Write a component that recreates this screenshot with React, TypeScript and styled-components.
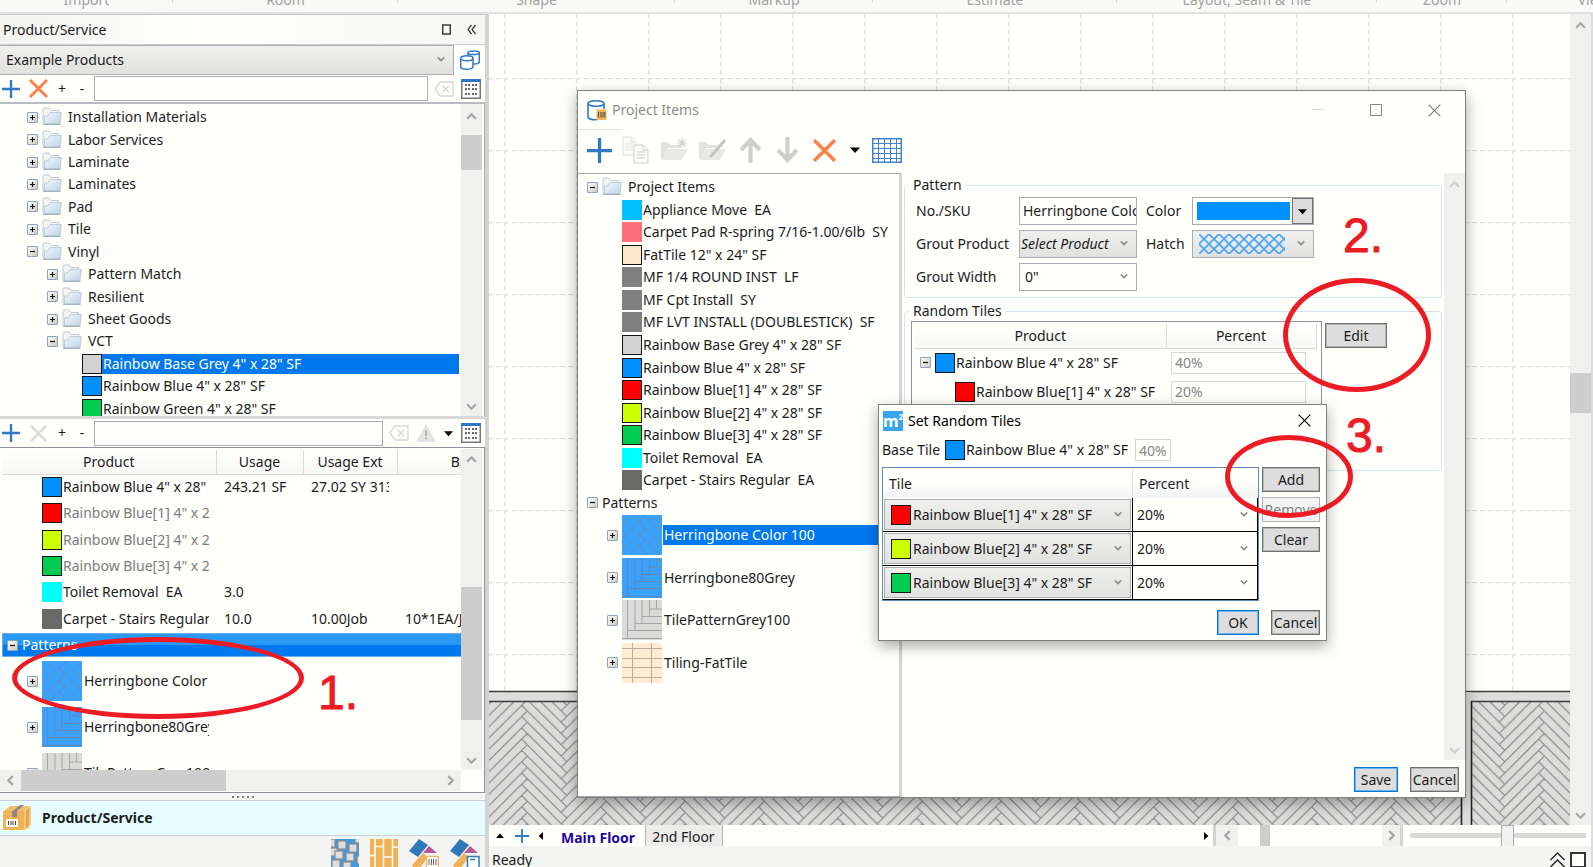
import React from "react";
import styled, { createGlobalStyle, css } from "styled-components";

const paper = "#fffffc";
const ink = "#1c1c1c";
const line = "#abadb3";
const accent = "#0078ee";
const brandBlue = "#2f78c4";
const marker = "#ed1c24";

const GlobalStyle = createGlobalStyle`
  * { box-sizing: border-box; }
  body { margin: 0; overflow: hidden; background: ${paper}; }
  body, button, input, select, table { font-family: "Noto Sans", "Open Sans", sans-serif; font-size: 14px; line-height: 20px; color: ${ink}; }
  button, input, select { margin: 0; padding: 0; border-radius: 0; outline: none; }
  ul { list-style: none; margin: 0; padding: 0; }
  svg { display: block; flex: none; }
`;

/* ---------- page frame ---------- */

const Page = styled.div`
  position: relative;
  display: flex;
  flex-direction: column;
  height: 100vh;
  overflow: hidden;
  background: ${paper};
`;

const Ribbon = styled.header`
  display: flex;
  flex: none;
  height: 14px;
  overflow: hidden;
  background: #f9faf7;
  border-bottom: 2px solid #dfe0e0;
`;

const RibbonGroup = styled.div<{ $w: number }>`
  flex: none;
  display: flex;
  justify-content: center;
  align-items: flex-end;
  width: ${(p) => p.$w}px;
  padding-bottom: 2px;
  color: #a2a2a2;
  background: linear-gradient(#d4d6d8, #d4d6d8) right top / 1px 3px no-repeat;
`;

const Workspace = styled.div`
  flex: 1;
  min-height: 0;
  display: flex;
`;

/* ---------- shared parts ---------- */

const IconButton = styled.button`
  display: flex;
  align-items: center;
  justify-content: center;
  flex: none;
  border: 0;
  background: none;
  color: ${ink};
`;

const PushButton = styled.button<{ $primary?: boolean }>`
  height: 25px;
  border: 1px solid ${(p) => (p.$primary ? "#0078d7" : "#707070")};
  box-shadow: inset 0 0 0 1px ${(p) => (p.$primary ? "#6fb4ea" : "#b5b5b5")};
  background: #dddddd;
  white-space: nowrap;
  &:disabled {
    background: #f4f4f4;
    border-color: #adb2b5;
    color: #838383;
    box-shadow: none;
  }
`;

const TextBox = styled.input<{ $muted?: boolean }>`
  min-width: 0;
  border: 1px solid ${(p) => (p.$muted ? "#d5d7d9" : line)};
  background: ${paper};
  color: ${(p) => (p.$muted ? "#868686" : ink)};
`;

const ComboFrame = styled.div<{ $flat?: boolean; $bare?: boolean }>`
  display: grid;
  align-items: center;
  min-width: 0;
  border: 1px solid ${line};
  background: ${paper};
  ${(p) => p.$flat && css`background: linear-gradient(#f0f0ee, #e1e1df);`}
  ${(p) => p.$bare && css`border: 0; background: none;`}
  & > * { grid-area: 1 / 1; }
`;

const ComboSelect = styled.select<{ $pad: number; $italic?: boolean }>`
  appearance: none;
  width: 100%;
  height: 100%;
  min-width: 0;
  padding: 0 0 0 ${(p) => p.$pad}px;
  border: 0;
  background: none;
  font-style: ${(p) => (p.$italic ? "italic" : "normal")};
`;

const ComboArrow = styled.span`
  justify-self: end;
  margin: 0 8px 2px 0;
  pointer-events: none;
`;

const ComboLead = styled.span`
  justify-self: start;
  margin-left: 6px;
  pointer-events: none;
`;

type ComboProps = {
  label?: string;
  id?: string;
  value: string;
  pad?: number;
  flat?: boolean;
  bare?: boolean;
  italic?: boolean;
  lead?: React.ReactNode;
  className?: string;
};

const Chevron = ({ dir = "down", size = 8, color = "#8a8a8a" }: { dir?: "down" | "up" | "left" | "right"; size?: number; color?: string }) => {
  const turn = { down: 0, left: 90, up: 180, right: 270 }[dir];
  return (
    <svg width={size} height={size} viewBox="0 0 10 10" aria-hidden="true">
      <path d="M1 3 L5 7 L9 3" transform={`rotate(${turn} 5 5)`} fill="none" stroke={color} strokeWidth="2" />
    </svg>
  );
};

const Combo = ({ label, id, value, pad = 4, flat, bare, italic, lead, className }: ComboProps) => (
  <ComboFrame $flat={flat} $bare={bare} className={className}>
    <ComboSelect id={id} aria-label={label} $pad={pad} $italic={italic} defaultValue={value}>
      <option>{value}</option>
    </ComboSelect>
    {lead && <ComboLead>{lead}</ComboLead>}
    <ComboArrow>
      <Chevron />
    </ComboArrow>
  </ComboFrame>
);

const Swatch = styled.span<{ $color: string; $edge?: boolean }>`
  display: block;
  flex: none;
  width: 20px;
  height: 20px;
  background: ${(p) => p.$color};
  border: 1px solid ${(p) => (p.$edge ? "#161616" : p.$color)};
`;

const ToggleButton = styled.button`
  display: block;
  flex: none;
  width: 11px;
  height: 11px;
  border: 1px solid #8ba3bd;
  border-radius: 1px;
  background: linear-gradient(135deg, #ffffff, #cfc9bd);
`;

const Toggle = ({ open }: { open?: boolean }) => (
  <ToggleButton aria-label={open ? "Collapse" : "Expand"}>
    <svg width="9" height="9" viewBox="0 0 9 9">
      <path d={open ? "M2 4.5H7" : "M2 4.5H7M4.5 2V7"} stroke="#111" strokeWidth="1.2" />
    </svg>
  </ToggleButton>
);

const ScrollBar = styled.div<{ $row?: boolean }>`
  flex: none;
  display: flex;
  flex-direction: ${(p) => (p.$row ? "row" : "column")};
  ${(p) => (p.$row ? "height" : "width")}: 21px;
  background: #f0f0ef;
`;

const ScrollEnd = styled.button<{ $size: number }>`
  flex: 0 0 ${(p) => p.$size}px;
  display: flex;
  align-items: center;
  justify-content: center;
  border: 0;
  background: none;
`;

const ScrollTrack = styled.div<{ $white?: boolean }>`
  flex: 1;
  display: flex;
  flex-direction: inherit;
  background: ${(p) => (p.$white ? paper : "none")};
`;

const ScrollGap = styled.div<{ $size: string }>`
  flex: 0 0 ${(p) => p.$size};
`;

const ScrollThumb = styled.div<{ $size: string }>`
  flex: 0 0 ${(p) => p.$size};
  background: #cdcdcd;
`;

/* ---------- drawings ---------- */

const PlusIcon = ({ size }: { size: number }) => (
  <svg width={size} height={size} viewBox="0 0 20 20" aria-hidden="true">
    <path d="M10 0V20M0 10H20" stroke={brandBlue} strokeWidth="2.6" />
  </svg>
);

const CrossIcon = ({ size, color = "#ff7f45", weight = 3 }: { size: number; color?: string; weight?: number }) => (
  <svg width={size} height={size} viewBox="0 0 20 20" aria-hidden="true">
    <path d="M1 1L19 19M19 1L1 19" stroke={color} strokeWidth={weight} />
  </svg>
);

const Caret = ({ dir = "down", size = 9 }: { dir?: "down" | "up" | "left" | "right"; size?: number }) => (
  <svg width={size} height={size} viewBox="0 0 10 10" aria-hidden="true">
    <path d="M0 2.5H10L5 8Z" fill="#000" transform={`rotate(${{ down: 0, left: 90, up: 180, right: 270 }[dir]} 5 5)`} />
  </svg>
);

const FolderIcon = () => (
  <svg width="20" height="18" viewBox="0 0 20 18" aria-hidden="true">
    <defs>
      <linearGradient id="folderFill" x1="0" y1="0" x2="1" y2="1">
        <stop offset="0" stopColor="#f3f8fb" />
        <stop offset="1" stopColor="#bed2e4" />
      </linearGradient>
    </defs>
    <path d="M1 16V2.5Q1 1 2.500 1H7L9 3.500H16.500V16Z" fill="#f3f4f4" stroke="#c0c9cf" />
    <path d="M2.500 17V9H6L8 5.500H19.300L18 17Z" fill="url(#folderFill)" stroke="#b3c4d2" strokeWidth=".8" />
    <path d="M1 17.300H18.500" stroke="#93a5b4" />
  </svg>
);

const DatabasesIcon = () => (
  <svg width="20" height="20" viewBox="0 0 20 20" fill="none" stroke={brandBlue} strokeWidth="1.500" aria-hidden="true">
    <path d="M8 5V2.800C8 .4 19.300 .4 19.300 2.800V12C19.300 13.500 16 14.200 13.500 14" />
    <path d="M8 2.800C8 5.200 19.300 5.200 19.300 2.800" />
    <path d="M.7 8.300V16.800C.7 20 13 20 13 16.800V8.300" fill={paper} />
    <ellipse cx="6.850" cy="8.300" rx="6.150" ry="2.500" fill={paper} />
  </svg>
);

const ProjectDbIcon = () => (
  <svg width="20" height="21" viewBox="0 0 20 21" fill="none" aria-hidden="true">
    <path d="M1 3.500V17C1 19.500 7 20 10 19.500M17 3.500V9" stroke={brandBlue} strokeWidth="1.600" />
    <ellipse cx="9" cy="3.500" rx="8" ry="2.700" stroke={brandBlue} strokeWidth="1.600" />
    <rect x="9.500" y="9.500" width="10" height="10.500" fill="#f0b45c" />
    <path d="M11.500 12V17.500M14 12V17.500M16 12V17.500M17.800 12V17.500" stroke="#5b5550" strokeWidth="1.100" />
  </svg>
);

const BackspaceIcon = () => (
  <svg width="20" height="16" viewBox="0 0 20 16" fill="none" stroke="#d6d7d6" strokeWidth="1.300" aria-hidden="true">
    <path d="M6 1H19V15H6L1 8Z" />
    <path d="M8.500 4.500L15 11.500M15 4.500L8.500 11.500" />
  </svg>
);

const CalendarIcon = () => (
  <svg width="20" height="20" viewBox="0 0 20 20" aria-hidden="true">
    <rect x=".75" y="1" width="18.500" height="18.250" fill="#fff" stroke="#76777b" strokeWidth="1.500" />
    <rect width="20" height="3" fill={brandBlue} />
    {[5, 9, 14].map((y) => [4, 7, 11, 14].map((x) => <rect key={`${x}-${y}`} x={x} y={y} width="2" height="2" fill="#66666a" />))}
  </svg>
);

const WarningIcon = () => (
  <svg width="20" height="18" viewBox="0 0 20 18" aria-hidden="true">
    <path d="M10 0L20 18H0Z" fill="#e4e4e2" />
    <path d="M10 6V12M10 13.500V15.500" stroke="#b9b9b8" strokeWidth="2" />
  </svg>
);

const CopyIcon = () => (
  <svg width="28" height="28" viewBox="0 0 28 28" aria-hidden="true" fill="#fbfbf9" stroke="#e6e6e4" strokeWidth="1.400">
    <path d="M1 1H9L14 6V19H1Z" />
    <path d="M3.500 8H11M3.500 11H11M3.500 14H11M9 1V6H14" />
    <path d="M12 9H21L26 14V27H12Z" stroke="#dcdcda" />
    <path d="M15 16H23M15 19H23M15 22H23M21 9V14H26" stroke="#dcdcda" />
  </svg>
);

const OpenFolderIcon = ({ mark }: { mark: "star" | "pen" }) => (
  <svg width="28" height="24" viewBox="0 0 28 24" aria-hidden="true">
    <path d="M1 21V4H8L10 7H21V10H8L3 22Z" fill="#e2e2e0" />
    <path d="M8 11H28L22 22H3Z" fill="#e8e8e6" />
    {mark === "star" ? (
      <path d="M22 0V10M17 5H27M18.500 1.500L25.500 8.500M25.500 1.500L18.500 8.500" stroke="#d2d2d0" strokeWidth="1.200" />
    ) : (
      <path d="M27 2L14 17L12 19" stroke="#c4c4c2" strokeWidth="3" />
    )}
  </svg>
);

const ArrowIcon = ({ down }: { down?: boolean }) => (
  <svg width="21" height="26" viewBox="0 0 21 26" aria-hidden="true">
    <path d="M10.500 26V4M1 13L10.500 3L20 13" transform={down ? "rotate(180 10.500 13)" : undefined} fill="none" stroke="#cfcfce" strokeWidth="4.200" />
  </svg>
);

const SheetIcon = () => (
  <svg width="30" height="25" viewBox="0 0 30 25" fill="none" stroke="#3f83c9" aria-hidden="true">
    <rect x=".75" y=".75" width="28.500" height="23.500" strokeWidth="1.500" />
    <path d="M6.500 1V24M12.500 1V24M18.500 1V24M24.500 1V24M1 5.500H29M1 10.500H29M1 15.500H29M1 20.500H29" strokeWidth="1" />
  </svg>
);

/* Zig-zag plank joints: peak lies at x = half, each plank end is capped by its neighbour. */
const zigzag = (half: number, step: number, peak: number) => {
  const q = step / 4;
  const parts: string[] = [];
  for (let k = -2; k < 2 + Math.ceil((half * 4) / step); k++) {
    for (let turn = -1; turn <= 1; turn++) {
      const x0 = peak + turn * half * 2;
      const b = k * step;
      parts.push(`M${x0 - half - q} ${b + half + q}L${x0 + q} ${b - q}`);
      parts.push(`M${x0 - q} ${b + q}L${x0 + half + q} ${b + half + 3 * q}`);
    }
  }
  return parts.join("");
};

/* 4" x 28" planks: the joint spacing is a seventh of the zig-zag period. */
const floorPeriod = 79;
const floorStep = floorPeriod / 7;

const FloorPattern = ({ id, peak }: { id: string; peak: number }) => (
  <pattern id={id} width={floorPeriod} height={floorStep * 4} patternUnits="userSpaceOnUse">
    <rect width="79" height="60" fill="#dcdcdb" />
    <path d={zigzag(floorPeriod / 2, floorStep, peak)} transform={`translate(0 ${-floorStep * 5})`} fill="none" stroke="#8f8f8f" strokeWidth="1.300" />
  </pattern>
);

const FloorPlan = () => (
  <svg width="100%" height="100%" aria-hidden="true">
    <defs>
      <pattern id="guides" x="15" y="64" width="72" height="72" patternUnits="userSpaceOnUse">
        <path d="M.5 0V72M0 .5H72" stroke="#dfdfdc" strokeWidth="1.500" strokeDasharray="5 3" />
      </pattern>
      <FloorPattern id="floorMain" peak={35.500} />
      <FloorPattern id="floorSide" peak={25.500} />
    </defs>
    <rect width="100%" height="677" fill="url(#guides)" />
    <rect y="677" width="100%" height="10" fill="#dddddc" />
    <rect y="687" width="100%" height="400" fill="url(#floorMain)" />
    <rect x="982" y="687" width="400" height="400" fill="url(#floorSide)" />
    <path d="M0 677.500H1400M0 687.500H1400" stroke="#3c3c3c" strokeWidth="1.600" />
    <rect x="972" y="678" width="10" height="400" fill="#dddddc" />
    <path d="M972.500 678V1100M982.500 687V1100" stroke="#222" strokeWidth="1.600" />
  </svg>
);

type Thumb = "diagonal" | "straightBlue" | "straightGrey" | "grid";

const PatternThumb = ({ kind }: { kind: Thumb }) => {
  const fill = { diagonal: "#3aa2fd", straightBlue: "#3aa2fd", straightGrey: "#dadad9", grid: "#ffecd2" }[kind];
  const stroke = { diagonal: "#6a8aab", straightBlue: "#6389b0", straightGrey: "#a6a6a6", grid: "#b9ad9e" }[kind];
  const shape = {
    diagonal: zigzag(27, 12, 20),
    straightBlue: "M5.500 0V38M13 0V30.500M20 0V23.500M27.500 0V16.500M34.500 0V9M0 38.500H40M5.500 30.500H40M13 23.500H40M20 16.500H40M27.500 9H40M34.500 2H40",
    straightGrey: "M5.500 0V38M13 0V30.500M20 0V23.500M27.500 0V16.500M34.500 0V9M0 38.500H40M5.500 30.500H40M13 23.500H40M20 16.500H40M27.500 9H40",
    grid: "M10.500 0V40M29.500 0V40M0 5.500H40M0 15.500H40M0 24.500H40M0 34.500H40",
  }[kind];
  return (
    <svg width="40" height="40" viewBox="0 0 40 40" aria-hidden="true">
      <rect width="40" height="40" fill={fill} />
      <path d={shape} transform={kind === "diagonal" ? "translate(0 -20)" : undefined} fill="none" stroke={stroke} strokeWidth="1" />
    </svg>
  );
};

const HatchPreview = () => (
  <svg width="86" height="20" viewBox="0 0 86 20" aria-hidden="true">
    <defs>
      <pattern id="hatch" width="10" height="10" patternUnits="userSpaceOnUse">
        <path d="M-1 -1L11 11M11 -1L-1 11" stroke="#4ba6f5" strokeWidth="1.700" />
      </pattern>
    </defs>
    <rect width="86" height="20" fill="url(#hatch)" />
  </svg>
);

const BoxIcon = () => (
  <svg width="28" height="26" viewBox="0 0 28 26" aria-hidden="true">
    <path d="M7 1H28V20L24 25V6H1Z" fill="#f3bd69" />
    <path d="M0 6H22V25H0Z" fill="#f0b254" />
    <path d="M22 6L27 1V20L22 25Z" fill="#e7a848" stroke="#fff3de" strokeWidth=".7" />
    <path d="M10 6L17 0H21L14 6V12H9V6Z" fill="#8b8682" />
    <rect x="3" y="14" width="12" height="8" rx="1" fill="#fff" />
    <path d="M5.500 16V20M8 16V20M10 16V20M12.500 16V20" stroke="#444" strokeWidth="1" />
  </svg>
);

const MosaicIcon = () => (
  <svg width="28" height="28" viewBox="0 0 28 28" aria-hidden="true">
    <rect width="28" height="28" fill="#3d9be5" />
    {[[-4, 0], [7, 2], [18, 5], [-2, 9], [4, 12], [15, 14], [24, -4], [1, 21], [12, 23], [26, 17]].map(([x, y]) => (
      <rect key={`${x},${y}`} x={x} y={y} width="8" height="8" fill="#dedede" stroke="#8a8a8a" strokeWidth="1.200" />
    ))}
  </svg>
);

const PlankIcon = () => (
  <svg width="28" height="28" viewBox="0 0 28 28" aria-hidden="true">
    <rect width="28" height="28" fill="#f0b254" />
    <path d="M5 0V28M13.500 0V28M22.500 0V28M0 16.500H5M5 7.500H13.500M13.500 18H22.500M22.500 8H28" stroke="#fff" strokeWidth="1.500" />
  </svg>
);

const SamplesIcon = ({ paperTag }: { paperTag?: boolean }) => (
  <svg width="30" height="30" viewBox="0 0 30 30" aria-hidden="true">
    <path d="M10 0L19 6L9 18L0 12Z" fill="#2f78b9" />
    <path d="M20 7L28 14H14Z" fill="#bb5599" />
    <path d="M3 26L14 14L19 18L10 30H5Z" fill="#f0b254" />
    {paperTag ? (
      <path d="M17.500 17.500H29V30H17.500ZM20 20.500H25" fill="#fff" stroke="#2f78b9" strokeWidth="1.500" />
    ) : (
      <>
        <rect x="17.500" y="17.500" width="12" height="13" fill="#fff" stroke="#efb768" strokeWidth="1.500" />
        <path d="M20 20V26M22.500 20V26M24.500 20V26M27 20V26" stroke="#666" />
      </>
    )}
  </svg>
);

/* ---------- tree ---------- */

const TreeRows = styled.ul<{ $h: number }>`
  flex: none;
  display: flex;
  flex-direction: column;
  height: ${(p) => p.$h}px;
`;

const TreeRow = styled.li<{ $indent: number }>`
  flex: 1;
  min-height: 0;
  display: flex;
  align-items: center;
  padding-left: ${(p) => p.$indent}px;
  white-space: pre;
`;

const FolderSlot = styled.span`
  flex: none;
  margin: 0 6px 2px 4px;
`;

const NodeText = styled.span<{ $selected?: boolean; $gap?: number }>`
  padding-left: ${(p) => p.$gap || 0}px;
  white-space: pre;
  ${(p) => p.$selected && css`
    flex: 1;
    background: ${accent};
    color: #ffffff;
  `}
`;

type TreeItem = { text: string; indent: number; open?: boolean; folder?: boolean; toggle?: boolean; color?: string; edge?: boolean; selected?: boolean };

const TreeList = ({ items, height }: { items: TreeItem[]; height: number }) => (
  <TreeRows $h={height}>
    {items.map((item) => (
      <TreeRow key={item.text} $indent={item.indent}>
        {item.toggle && <Toggle open={item.open} />}
        {item.folder && (
          <FolderSlot>
            <FolderIcon />
          </FolderSlot>
        )}
        {item.color && <Swatch $color={item.color} $edge={item.edge} />}
        <NodeText $selected={item.selected} $gap={item.color ? 1 : item.folder ? 0 : 4}>
          {item.text}
        </NodeText>
      </TreeRow>
    ))}
  </TreeRows>
);

const folder = (text: string, indent: number, open = false): TreeItem => ({ text, indent, open, folder: true, toggle: true });

const catalog: TreeItem[] = [
  folder("Installation Materials", 27),
  folder("Labor Services", 27),
  folder("Laminate", 27),
  folder("Laminates", 27),
  folder("Pad", 27),
  folder("Tile", 27),
  folder("Vinyl", 27, true),
  folder("Pattern Match", 47),
  folder("Resilient", 47),
  folder("Sheet Goods", 47),
  folder("VCT", 47, true),
  { text: 'Rainbow Base Grey 4" x 28" SF', indent: 82, color: "#d2d2d2", edge: true, selected: true },
  { text: 'Rainbow Blue 4" x 28" SF', indent: 82, color: "#0090ff", edge: true },
  { text: 'Rainbow Green 4" x 28" SF', indent: 82, color: "#00cc50", edge: true },
];

const swatchRow = (text: string, color: string, edge = false): TreeItem => ({ text, color, edge, indent: 44 });

const projectItems: TreeItem[] = [
  folder("Project Items", 9, true),
  swatchRow("Appliance Move  EA", "#00bfff"),
  swatchRow("Carpet Pad R-spring 7/16-1.00/6lb  SY", "#ff6f7b"),
  swatchRow('FatTile 12" x 24" SF', "#ffe9c8", true),
  swatchRow("MF 1/4 ROUND INST  LF", "#808080"),
  swatchRow("MF Cpt Install  SY", "#808080"),
  swatchRow("MF LVT INSTALL (DOUBLESTICK)  SF", "#808080"),
  swatchRow('Rainbow Base Grey 4" x 28" SF', "#d2d2d2", true),
  swatchRow('Rainbow Blue 4" x 28" SF', "#0090ff", true),
  swatchRow('Rainbow Blue[1] 4" x 28" SF', "#ff0000", true),
  swatchRow('Rainbow Blue[2] 4" x 28" SF', "#ccff00", true),
  swatchRow('Rainbow Blue[3] 4" x 28" SF', "#00cc50", true),
  swatchRow("Toilet Removal  EA", "#00ffff"),
  swatchRow("Carpet - Stairs Regular  EA", "#696968"),
  { text: "Patterns", indent: 9, toggle: true, open: true },
];

/* ---------- left panel ---------- */

const SidePanel = styled.aside`
  flex: none;
  display: flex;
  flex-direction: column;
  width: 489px;
  overflow: hidden;
  border-top: 1px solid #c9cbd0;
  border-right: 4px solid #d3d3d3;
  background: ${paper};
`;

const PanelTitle = styled.div`
  flex: none;
  display: flex;
  align-items: center;
  gap: 16px;
  height: 30px;
  padding: 0 9px 0 3px;
  border-bottom: 1px solid #cdd0d6;
  background: linear-gradient(90deg, #f3f3f2, ${paper} 40%, #f6f6f5);
`;

const PanelTitleText = styled.h2`
  flex: 1;
  margin: 0;
  font-size: 14px;
  font-weight: 400;
`;

const LibraryRow = styled.div`
  flex: none;
  display: flex;
  align-items: center;
  gap: 6px;
  height: 30px;
  padding-right: 5px;
`;

const LibraryCombo = styled(Combo)`
  flex: 1;
  height: 30px;
  border-left: 0;
`;

const PanelTools = styled.div<{ $h: number }>`
  flex: none;
  display: flex;
  align-items: center;
  height: ${(p) => p.$h}px;
  padding: 0 4px 0 2px;
`;

const ToolSlot = styled(IconButton)<{ $w: number; $ml?: number }>`
  width: ${(p) => p.$w}px;
  height: 22px;
  margin-left: ${(p) => p.$ml || 0}px;
  font-size: 14px;
`;

const FilterBox = styled(TextBox)`
  flex: 1;
  height: 25px;
  margin-left: 6px;
`;

const CatalogPane = styled.div`
  flex: none;
  display: flex;
  height: 314px;
  padding-right: 2px;
  overflow: hidden;
  border-top: 2px solid #b9bcc3;
  border-right: 1px solid ${line};
`;

const CatalogBody = styled.div`
  flex: 1;
  min-width: 0;
  overflow: hidden;
  padding: 2px 2px 0 0;
`;

const Splitter = styled.div`
  flex: none;
  height: 3px;
  background: #d8d8d8;
`;

const UsagePane = styled.section`
  flex: none;
  display: grid;
  grid-template-columns: minmax(0, 1fr) 21px;
  grid-template-rows: 321px 21px;
  padding: 1px 2px 1px 0;
  border: 1px solid #8f939d;
  border-left: 0;
`;

const UsageBody = styled.div`
  min-width: 0;
  overflow: hidden;
  padding: 1px 0 0 2px;
`;

const UsageTable = styled.table`
  table-layout: fixed;
  width: 577px;
  height: 182px;
  border-collapse: collapse;
  th {
    height: 24px;
    padding: 0;
    font-weight: 400;
    border-right: 1px solid #dcdcdc;
    border-bottom: 1px solid #dcdcdc;
    background: linear-gradient(${paper}, #f7f7f6);
  }
  td {
    height: 26px;
    padding: 0 8px 0 8px;
  }
  td:first-child { padding: 0 7px 0 40px; }
`;

const CellClip = styled.div<{ $muted?: boolean }>`
  display: flex;
  align-items: center;
  gap: 1px;
  overflow: hidden;
  white-space: pre;
  color: ${(p) => (p.$muted ? "#7c7c7c" : ink)};
`;

const GroupBar = styled.div`
  display: flex;
  align-items: center;
  height: 24px;
  margin-top: 1px;
  padding-left: 4px;
  gap: 4px;
  color: #ffffff;
  border: 1px solid #6aaeea;
  border-right: 0;
  background: linear-gradient(#2a99f4 50%, #0078ee 50%);
`;

const PatternRow = styled.div<{ $h: number; $indent: number }>`
  display: flex;
  align-items: center;
  gap: 4px;
  height: ${(p) => p.$h}px;
  padding-left: ${(p) => p.$indent}px;
`;

const PatternName = styled.span<{ $w?: number; $selected?: boolean }>`
  margin-left: -3px;
  padding-left: 1px;
  overflow: hidden;
  white-space: nowrap;
  ${(p) => p.$w && css`width: ${p.$w}px;`}
  ${(p) => p.$selected && css`flex: 1; background: ${accent}; color: #fff;`}
`;

const Grip = styled.div`
  flex: none;
  height: 7px;
  background: #f6f6f4;
  display: flex;
  justify-content: center;
  align-items: center;
  gap: 3px;
`;

const GripDot = styled.i`
  width: 2px;
  height: 2px;
  background: #7d7d7d;
`;

const NavButton = styled.button`
  flex: none;
  display: flex;
  align-items: center;
  gap: 11px;
  height: 36px;
  padding-left: 3px;
  border: 0;
  border-top: 1px solid #cdd0d6;
  border-bottom: 1px solid #cdd0d6;
  background: #e6feff;
  font-weight: 700;
`;

const NavIcons = styled.div`
  flex: 1;
  display: flex;
  align-items: flex-start;
  justify-content: flex-end;
  gap: 11px;
  padding: 3px 5px 0 0;
  background: #f4f4f3;
`;

type UsageRow = { name: string; color: string; edge?: boolean; muted?: boolean; usage?: string; ext?: string; extra?: string };

const usageRows: UsageRow[] = [
  { name: 'Rainbow Blue 4" x 28" SF', color: "#0090ff", edge: true, usage: "243.21 SF", ext: "27.02 SY 313" },
  { name: 'Rainbow Blue[1] 4" x 28" SF', color: "#ff0000", edge: true, muted: true },
  { name: 'Rainbow Blue[2] 4" x 28" SF', color: "#ccff00", edge: true, muted: true },
  { name: 'Rainbow Blue[3] 4" x 28" SF', color: "#00cc50", edge: true, muted: true },
  { name: "Toilet Removal  EA", color: "#00ffff", usage: "3.0" },
  { name: "Carpet - Stairs Regular  EA", color: "#696968", usage: "10.0", ext: "10.00Job", extra: "10*1EA/Job" },
];

const LeftPanel = () => (
  <SidePanel>
    <PanelTitle>
      <PanelTitleText>Product/Service</PanelTitleText>
      <IconButton aria-label="Float panel">
        <svg width="9" height="11" viewBox="0 0 9 11"><rect x=".75" y="1" width="7.500" height="9" fill="none" stroke="#3c3c3c" strokeWidth="1.500" /></svg>
      </IconButton>
      <IconButton aria-label="Hide panel">
        <svg width="9" height="11" viewBox="0 0 9 11"><path d="M4.500 1L1 5.500L4.500 10M8.500 1L5 5.500L8.500 10" fill="none" stroke="#3c3c3c" strokeWidth="1.300" /></svg>
      </IconButton>
    </PanelTitle>
    <LibraryRow>
      <LibraryCombo label="Product library" value="Example Products" flat pad={6} />
      <IconButton aria-label="Databases"><DatabasesIcon /></IconButton>
    </LibraryRow>
    <PanelTools $h={27}>
      <ToolSlot $w={18} aria-label="Add product"><PlusIcon size={18} /></ToolSlot>
      <ToolSlot $w={19} $ml={9} aria-label="Delete product"><CrossIcon size={19} /></ToolSlot>
      <ToolSlot $w={12} $ml={8}>+</ToolSlot>
      <ToolSlot $w={12} $ml={8}>-</ToolSlot>
      <FilterBox aria-label="Filter products" />
      <ToolSlot $w={20} $ml={6} aria-label="Clear filter"><BackspaceIcon /></ToolSlot>
      <ToolSlot $w={20} $ml={7} aria-label="Columns"><CalendarIcon /></ToolSlot>
    </PanelTools>
    <CatalogPane>
      <CatalogBody>
        <TreeList items={catalog} height={314} />
      </CatalogBody>
      <ScrollBar>
        <ScrollEnd $size={24} aria-label="Scroll up"><Chevron dir="up" size={11} color="#a5a5a5" /></ScrollEnd>
        <ScrollTrack>
          <ScrollGap $size="7px" />
          <ScrollThumb $size="35px" />
        </ScrollTrack>
        <ScrollEnd $size={20} aria-label="Scroll down"><Chevron size={11} color="#a5a5a5" /></ScrollEnd>
      </ScrollBar>
    </CatalogPane>
    <Splitter />
    <PanelTools $h={28}>
      <ToolSlot $w={18} aria-label="Add item"><PlusIcon size={18} /></ToolSlot>
      <ToolSlot $w={19} $ml={9} aria-label="Delete item"><CrossIcon size={17} color="#dcdcda" /></ToolSlot>
      <ToolSlot $w={12} $ml={8}>+</ToolSlot>
      <ToolSlot $w={12} $ml={8}>-</ToolSlot>
      <FilterBox aria-label="Filter items" />
      <ToolSlot $w={20} $ml={6} aria-label="Clear item filter"><BackspaceIcon /></ToolSlot>
      <ToolSlot $w={20} $ml={7} aria-label="Warnings"><WarningIcon /></ToolSlot>
      <ToolSlot $w={9} $ml={8} aria-label="More"><Caret /></ToolSlot>
      <ToolSlot $w={20} $ml={8} aria-label="Item columns"><CalendarIcon /></ToolSlot>
    </PanelTools>
    <UsagePane>
      <UsageBody>
        <UsageTable>
          <colgroup><col width="214" /><col width="87" /><col width="94" /><col width="182" /></colgroup>
          <thead>
            <tr><th>Product</th><th>Usage</th><th>Usage Ext</th><th>Breakdown</th></tr>
          </thead>
          <tbody>
            {usageRows.map((row) => (
              <tr key={row.name}>
                <td><CellClip $muted={row.muted}><Swatch $color={row.color} $edge={row.edge} />{row.name}</CellClip></td>
                <td><CellClip>{row.usage}</CellClip></td>
                <td><CellClip>{row.ext}</CellClip></td>
                <td><CellClip>{row.extra}</CellClip></td>
              </tr>
            ))}
          </tbody>
        </UsageTable>
        <GroupBar><Toggle open />Patterns</GroupBar>
        <PatternRow $h={48} $indent={25}><Toggle /><PatternThumb kind="diagonal" /><PatternName $w={126}>Herringbone Color</PatternName></PatternRow>
        <PatternRow $h={44} $indent={25}><Toggle /><PatternThumb kind="straightBlue" /><PatternName $w={126}>Herringbone80Grey</PatternName></PatternRow>
        <PatternRow $h={48} $indent={25}><Toggle /><PatternThumb kind="straightGrey" /><PatternName $w={126}>TilePatternGrey100</PatternName></PatternRow>
      </UsageBody>
      <ScrollBar>
        <ScrollEnd $size={20} aria-label="Scroll up"><Chevron dir="up" size={11} color="#a5a5a5" /></ScrollEnd>
        <ScrollTrack>
          <ScrollGap $size="118px" />
          <ScrollThumb $size="133px" />
        </ScrollTrack>
        <ScrollEnd $size={20} aria-label="Scroll down"><Chevron size={11} color="#a5a5a5" /></ScrollEnd>
      </ScrollBar>
      <ScrollBar $row>
        <ScrollEnd $size={21} aria-label="Scroll left"><Chevron dir="left" size={11} color="#a5a5a5" /></ScrollEnd>
        <ScrollTrack>
          <ScrollThumb $size="205px" />
        </ScrollTrack>
        <ScrollEnd $size={21} aria-label="Scroll right"><Chevron dir="right" size={11} color="#a5a5a5" /></ScrollEnd>
      </ScrollBar>
    </UsagePane>
    <Grip>{[0, 1, 2, 3, 4].map((n) => <GripDot key={n} />)}</Grip>
    <NavButton><BoxIcon />Product/Service</NavButton>
    <NavIcons>
      <IconButton aria-label="Tiles"><MosaicIcon /></IconButton>
      <IconButton aria-label="Planks"><PlankIcon /></IconButton>
      <IconButton aria-label="Product samples"><SamplesIcon /></IconButton>
      <IconButton aria-label="Sample sheet"><SamplesIcon paperTag /></IconButton>
    </NavIcons>
  </SidePanel>
);

/* ---------- drawing area ---------- */

const MainArea = styled.main`
  flex: 1;
  min-width: 0;
  display: flex;
  flex-direction: column;
  border-right: 2px solid #dcdcdc;
`;

const CanvasRow = styled.div`
  flex: 1;
  min-height: 0;
  display: flex;
`;

const Canvas = styled.div`
  flex: 1;
  min-width: 0;
  overflow: hidden;
`;

const TabStrip = styled.nav`
  flex: none;
  display: flex;
  align-items: stretch;
  height: 21px;
  background: ${paper};
`;

const StripButton = styled(IconButton)<{ $w: number }>`
  width: ${(p) => p.$w}px;
`;

const FloorTab = styled.button<{ $active?: boolean }>`
  border: 0;
  white-space: nowrap;
  background: none;
  ${(p) => p.$active
    ? css`margin-left: 4px; color: #21079a; font-weight: 700; padding: 3px 10px 0 8px;`
    : css`padding: 2px 7px 0 6px; border: solid #b4b4b4; border-width: 0 1px 0 1px; background: #ececea;`}
`;

const StripSpacer = styled.div`
  flex: 1;
`;

const StripDivider = styled.div`
  width: 3px;
  background: #d3d3d3;
`;

const StripScroll = styled(ScrollBar)`
  width: 184px;
`;

const ZoomSlider = styled.input`
  appearance: none;
  flex: none;
  width: 176px;
  height: 21px;
  margin: 0 5px 0 7px;
  background: linear-gradient(#d9d9d8, #d9d9d8) center / 100% 5px no-repeat;
  &::-webkit-slider-thumb {
    appearance: none;
    width: 13px;
    height: 22px;
    background: #f1f1f1;
    border: 1px solid #acacac;
  }
`;

const StatusBar = styled.footer`
  flex: none;
  display: flex;
  align-items: center;
  height: 21px;
  padding: 6px 5px 0 3px;
  gap: 5px;
  background: #f4f5f2;
`;

const StatusText = styled.span`
  flex: 1;
`;

const DrawingArea = () => (
  <MainArea>
    <CanvasRow>
      <Canvas><FloorPlan /></Canvas>
      <ScrollBar>
        <ScrollEnd $size={22} aria-label="Scroll up"><Chevron dir="up" size={11} color="#a5a5a5" /></ScrollEnd>
        <ScrollTrack>
          <ScrollGap $size="337px" />
          <ScrollThumb $size="40px" />
        </ScrollTrack>
        <ScrollEnd $size={20} aria-label="Scroll down"><Chevron size={11} color="#a5a5a5" /></ScrollEnd>
      </ScrollBar>
    </CanvasRow>
    <TabStrip>
      <StripButton $w={22} aria-label="All floors"><Caret dir="up" size={8} /></StripButton>
      <StripButton $w={22} aria-label="Add floor"><PlusIcon size={14} /></StripButton>
      <StripButton $w={16} aria-label="Previous floor"><Caret dir="left" size={8} /></StripButton>
      <FloorTab $active>Main Floor</FloorTab>
      <FloorTab>2nd Floor</FloorTab>
      <StripSpacer />
      <StripButton $w={14} aria-label="Next floor"><Caret dir="right" size={8} /></StripButton>
      <StripDivider />
      <StripScroll $row>
        <ScrollEnd $size={22} aria-label="Scroll left"><Chevron dir="left" size={11} color="#a5a5a5" /></ScrollEnd>
        <ScrollTrack $white>
          <ScrollGap $size="22px" />
          <ScrollThumb $size="10px" />
        </ScrollTrack>
        <ScrollEnd $size={18} aria-label="Scroll right"><Chevron dir="right" size={11} color="#a5a5a5" /></ScrollEnd>
      </StripScroll>
      <StripDivider />
      <ZoomSlider type="range" aria-label="Zoom" min={0} max={100} defaultValue={56} />
    </TabStrip>
    <StatusBar>
      <StatusText>Ready</StatusText>
      <IconButton aria-label="Expand status">
        <svg width="15" height="16" viewBox="0 0 15 16"><path d="M.5 8L7.500 1L14.500 8M.5 15L7.500 8L14.500 15" fill="none" stroke="#222" strokeWidth="1.400" /></svg>
      </IconButton>
      <IconButton aria-label="Restore">
        <svg width="16" height="16" viewBox="0 0 16 16"><rect x="1" y="1" width="14" height="14" fill={paper} stroke="#222" strokeWidth="1.800" /></svg>
      </IconButton>
    </StatusBar>
  </MainArea>
);

/* ---------- floating windows ---------- */

const Window = styled.section<{ $x: number; $y: number; $w: number; $h: number }>`
  position: absolute;
  left: ${(p) => p.$x}px;
  top: ${(p) => p.$y}px;
  width: ${(p) => p.$w}px;
  height: ${(p) => p.$h}px;
  display: flex;
  flex-direction: column;
  border: 1px solid #808080;
  background: ${paper};
  box-shadow: 0 5px 14px rgba(0, 0, 0, 0.35);
`;

const WindowBar = styled.div<{ $h: number; $muted?: boolean }>`
  flex: none;
  display: flex;
  align-items: center;
  height: ${(p) => p.$h}px;
  padding: ${(p) => (p.$muted ? "0 24px 0 9px" : "0 15px 0 4px")};
  gap: 5px;
  color: ${(p) => (p.$muted ? "#8c8c8c" : "#000")};
`;

const WindowTitle = styled.h1`
  flex: 1;
  margin: 0;
  font-size: 14px;
  font-weight: 400;
`;

const WindowControls = styled.div`
  display: flex;
  gap: 46px;
`;

const ProjectTools = styled.div`
  flex: none;
  display: flex;
  align-items: center;
  height: 44px;
  padding: 0 0 2px 9px;
  gap: 10px;
  background: linear-gradient(#dcdfe2, #dcdfe2) left top / 44px 1px no-repeat;
`;

const WindowSplit = styled.div`
  flex: 1;
  min-height: 0;
  display: flex;
`;

const ItemsPane = styled.div`
  flex: none;
  display: flex;
  flex-direction: column;
  width: 324px;
  padding-top: 2px;
  border: 1px solid #a5a9b2;
  border-left: 0;
  border-right: 3px solid #d3d3d3;
`;

const PatternRows = styled.div`
  display: flex;
  flex-direction: column;
  justify-content: space-between;
  height: 170px;
`;

const DetailPane = styled.div`
  flex: 1;
  min-width: 0;
  display: flex;
  flex-direction: column;
`;

const DetailScroll = styled.div`
  flex: 1;
  display: flex;
`;

const DetailBody = styled.div`
  flex: 1;
  min-width: 0;
  display: flex;
  flex-direction: column;
  padding: 2px 2px 0 2px;
`;

const Group = styled.fieldset<{ $h: number }>`
  min-width: 0;
  height: ${(p) => p.$h}px;
  margin: 0 0 3px;
  padding: 0;
  border: 1px solid #d5e1ec;
  border-radius: 4px;
  legend {
    margin-left: 4px;
    padding: 0 4px;
  }
`;

const FieldGrid = styled.div`
  display: grid;
  grid-template-columns: 103px 118px 55px 122px;
  grid-template-rows: 28px 28px 28px;
  row-gap: 5px;
  align-items: center;
  padding: 2px 0 0 11px;
  & > :nth-child(4n + 3) { padding-left: 9px; }
  & > :nth-child(even) { align-self: stretch; }
`;

const SkuBox = styled(TextBox)`
  padding-left: 3px;
`;

const ColorPicker = styled.button`
  display: flex;
  border: 1px solid ${line};
  background: ${paper};
`;

const ColorFill = styled.span`
  flex: 1;
  align-self: stretch;
  margin: 4px 2px 4px 4px;
  background: #0090ff;
`;

const ColorDrop = styled.span`
  display: flex;
  align-items: center;
  justify-content: center;
  align-self: stretch;
  width: 21px;
  border: 1px solid #707070;
  background: #dddddd;
`;

const TilesRow = styled.div`
  display: flex;
  align-items: flex-start;
  gap: 3px;
  padding-left: 6px;
`;

const TilesBox = styled.div`
  width: 411px;
  height: 142px;
  overflow: hidden;
  padding: 2px 4px 0 3px;
  border: 1px solid #8f939d;
`;

const TilesTable = styled.table`
  table-layout: fixed;
  width: 401px;
  border-collapse: collapse;
  th {
    height: 24px;
    padding: 0;
    font-weight: 400;
    border: solid #dcdcdc;
    border-width: 0 1px 1px 0;
    background: linear-gradient(${paper}, #f7f7f6);
  }
  td {
    height: 29px;
    padding: 0 0 0 5px;
  }
`;

const TileCell = styled.div<{ $indent: number }>`
  display: flex;
  align-items: center;
  gap: 4px;
  padding-left: ${(p) => p.$indent}px;
  white-space: nowrap;
`;

const SwatchLabel = styled.span`
  display: flex;
  align-items: center;
  gap: 1px;
`;

const PercentBox = styled(TextBox)`
  display: block;
  width: 135px;
  height: 22px;
  padding-left: 3px;
`;

const EditButton = styled(PushButton)`
  width: 62px;
  margin-top: 2px;
`;

const WindowButtons = styled.div<{ $pad: string; $gap: number }>`
  display: flex;
  justify-content: flex-end;
  gap: ${(p) => p.$gap}px;
  padding: ${(p) => p.$pad};
`;

const SizedButton = styled(PushButton)<{ $w: number }>`
  width: ${(p) => p.$w}px;
`;

const ProjectItemsWindow = () => (
  <Window $x={577} $y={90} $w={889} $h={708} aria-label="Project Items">
    <WindowBar $h={38} $muted>
      <ProjectDbIcon />
      <WindowTitle>Project Items</WindowTitle>
      <WindowControls>
        <IconButton aria-label="Minimize"><svg width="12" height="12"><path d="M0 5.500H12" stroke="#dcdcda" /></svg></IconButton>
        <IconButton aria-label="Maximize"><svg width="12" height="12"><rect x=".5" y=".5" width="11" height="11" fill="none" stroke="#888" /></svg></IconButton>
        <IconButton aria-label="Close"><CrossIcon size={13} color="#777" weight={1.6} /></IconButton>
      </WindowControls>
    </WindowBar>
    <ProjectTools>
      <IconButton aria-label="Add"><PlusIcon size={25} /></IconButton>
      <IconButton aria-label="Copy" disabled><CopyIcon /></IconButton>
      <IconButton aria-label="New folder" disabled><OpenFolderIcon mark="star" /></IconButton>
      <IconButton aria-label="Rename folder" disabled><OpenFolderIcon mark="pen" /></IconButton>
      <ToolSlot $w={28} aria-label="Move up" disabled><ArrowIcon /></ToolSlot>
      <ToolSlot $w={26} aria-label="Move down" disabled><ArrowIcon down /></ToolSlot>
      <ToolSlot $w={28} aria-label="Delete"><CrossIcon size={23} /></ToolSlot>
      <ToolSlot $w={14} aria-label="Delete options"><Caret size={10} /></ToolSlot>
      <IconButton aria-label="Table view"><SheetIcon /></IconButton>
    </ProjectTools>
    <WindowSplit>
      <ItemsPane>
        <TreeList items={projectItems} height={338} />
        <PatternRows>
          <PatternRow $h={42} $indent={29}><Toggle /><PatternThumb kind="diagonal" /><PatternName $selected>Herringbone Color 100</PatternName></PatternRow>
          <PatternRow $h={42} $indent={29}><Toggle /><PatternThumb kind="straightBlue" /><PatternName>Herringbone80Grey</PatternName></PatternRow>
          <PatternRow $h={42} $indent={29}><Toggle /><PatternThumb kind="straightGrey" /><PatternName>TilePatternGrey100</PatternName></PatternRow>
          <PatternRow $h={42} $indent={29}><Toggle /><PatternThumb kind="grid" /><PatternName>Tiling-FatTile</PatternName></PatternRow>
        </PatternRows>
      </ItemsPane>
      <DetailPane>
        <DetailScroll>
          <DetailBody>
            <Group $h={123}>
              <legend>Pattern</legend>
              <FieldGrid>
                <label htmlFor="sku">No./SKU</label>
                <SkuBox id="sku" defaultValue="Herringbone Color 100" />
                <label htmlFor="color">Color</label>
                <ColorPicker id="color" aria-label="Color">
                  <ColorFill />
                  <ColorDrop><Caret /></ColorDrop>
                </ColorPicker>
                <label htmlFor="groutProduct">Grout Product</label>
                <Combo id="groutProduct" value="Select Product" flat italic pad={1} />
                <label htmlFor="hatchKind">Hatch</label>
                <Combo id="hatchKind" value="" flat lead={<HatchPreview />} />
                <label htmlFor="groutWidth">Grout Width</label>
                <Combo id="groutWidth" value={'0"'} pad={5} />
              </FieldGrid>
            </Group>
            <Group $h={170}>
              <legend>Random Tiles</legend>
              <TilesRow>
                <TilesBox>
                  <TilesTable>
                    <colgroup><col width="251" /><col width="150" /></colgroup>
                    <thead><tr><th>Product</th><th>Percent</th></tr></thead>
                    <tbody>
                      <tr>
                        <td><TileCell $indent={0}><Toggle open /><SwatchLabel><Swatch $color="#0090ff" $edge />Rainbow Blue 4&quot; x 28&quot; SF</SwatchLabel></TileCell></td>
                        <td><PercentBox $muted readOnly aria-label="Base percent" value="40%" /></td>
                      </tr>
                      <tr>
                        <td><TileCell $indent={35}><SwatchLabel><Swatch $color="#ff0000" $edge />Rainbow Blue[1] 4&quot; x 28&quot; SF</SwatchLabel></TileCell></td>
                        <td><PercentBox $muted readOnly aria-label="First percent" value="20%" /></td>
                      </tr>
                    </tbody>
                  </TilesTable>
                </TilesBox>
                <EditButton>Edit</EditButton>
              </TilesRow>
            </Group>
          </DetailBody>
          <ScrollBar>
            <ScrollEnd $size={22} aria-label="Scroll up"><Chevron dir="up" size={11} color="#cfcfcf" /></ScrollEnd>
            <ScrollTrack />
            <ScrollEnd $size={20} aria-label="Scroll down"><Chevron size={11} color="#cfcfcf" /></ScrollEnd>
          </ScrollBar>
        </DetailScroll>
        <WindowButtons $pad="7px 6px 5px 0" $gap={12}>
          <SizedButton $w={44} $primary>Save</SizedButton>
          <SizedButton $w={49}>Cancel</SizedButton>
        </WindowButtons>
      </DetailPane>
    </WindowSplit>
  </Window>
);

const AppBadge = styled.span`
  display: flex;
  align-items: center;
  justify-content: center;
  width: 20px;
  height: 20px;
  background: #39a5f0;
  color: #ffffff;
  font-weight: 700;
  font-size: 16px;
  line-height: 20px;
  sup {
    font-size: 8px;
    line-height: 8px;
    margin-bottom: 8px;
  }
`;

const BaseRow = styled.div`
  flex: none;
  display: flex;
  align-items: center;
  height: 28px;
  padding-left: 3px;
  gap: 5px;
  white-space: nowrap;
`;

const BasePercent = styled(TextBox)`
  width: 36px;
  height: 22px;
  margin-left: 2px;
  padding-left: 3px;
`;

const RandomBody = styled.div`
  display: flex;
  gap: 3px;
  padding: 3px 0 0 3px;
`;

const RandomTable = styled.table`
  table-layout: fixed;
  width: 377px;
  border-collapse: separate;
  border-spacing: 0;
  border: 1px solid #5e8cbf;
  th {
    height: 30px;
    padding: 2px 0 0 6px;
    text-align: left;
    font-weight: 400;
    border-right: 1px solid #dfe1e3;
    background: linear-gradient(${paper} 40%, #f2f4f5);
  }
  th:last-child { border-right: 0; }
  td {
    height: 34px;
    padding: 1px;
    border-right: 1px solid #000;
    border-bottom: 1px solid #000;
  }
`;

const TileCombo = styled(Combo)`
  height: 31px;
`;

const ButtonColumn = styled.div`
  display: flex;
  flex-direction: column;
  gap: 5px;
`;

const randomTiles = [
  { name: 'Rainbow Blue[1] 4" x 28" SF', color: "#ff0000" },
  { name: 'Rainbow Blue[2] 4" x 28" SF', color: "#ccff00" },
  { name: 'Rainbow Blue[3] 4" x 28" SF', color: "#00cc50" },
];

const RandomTilesWindow = () => (
  <Window $x={878} $y={404} $w={449} $h={237} aria-label="Set Random Tiles">
    <WindowBar $h={31}>
      <AppBadge>m<sup>2</sup></AppBadge>
      <WindowTitle>Set Random Tiles</WindowTitle>
      <IconButton aria-label="Close"><CrossIcon size={13} color="#000" weight={1.8} /></IconButton>
    </WindowBar>
    <BaseRow>
      <label htmlFor="basePercent">Base Tile</label>
      <SwatchLabel><Swatch $color="#0090ff" $edge />Rainbow Blue 4&quot; x 28&quot; SF</SwatchLabel>
      <BasePercent id="basePercent" $muted readOnly value="40%" />
    </BaseRow>
    <RandomBody>
      <RandomTable>
        <colgroup><col width="250" /><col width="125" /></colgroup>
        <thead><tr><th>Tile</th><th>Percent</th></tr></thead>
        <tbody>
          {randomTiles.map((tile) => (
            <tr key={tile.name}>
              <td><TileCombo label={`Tile ${tile.name}`} value={tile.name} flat pad={28} lead={<Swatch $color={tile.color} $edge />} /></td>
              <td><TileCombo label={`Percent ${tile.name}`} value="20%" bare pad={3} /></td>
            </tr>
          ))}
        </tbody>
      </RandomTable>
      <ButtonColumn>
        <SizedButton $w={58}>Add</SizedButton>
        <SizedButton $w={58} disabled>Remove</SizedButton>
        <SizedButton $w={58}>Clear</SizedButton>
      </ButtonColumn>
    </RandomBody>
    <WindowButtons $pad="9px 6px 0 0" $gap={12}>
      <SizedButton $w={42} $primary>OK</SizedButton>
      <SizedButton $w={49}>Cancel</SizedButton>
    </WindowButtons>
  </Window>
);

/* ---------- step markers ---------- */

const Ring = styled.div<{ $x: number; $y: number; $w: number; $h: number }>`
  position: absolute;
  left: ${(p) => p.$x}px;
  top: ${(p) => p.$y}px;
  width: ${(p) => p.$w}px;
  height: ${(p) => p.$h}px;
  border: 5px solid ${marker};
  border-radius: 50%;
  pointer-events: none;
`;

const StepNumber = styled.div<{ $x: number; $y: number }>`
  position: absolute;
  left: ${(p) => p.$x}px;
  top: ${(p) => p.$y}px;
  font-family: "Liberation Sans", sans-serif;
  font-size: 48px;
  line-height: 48px;
  color: ${marker};
  -webkit-text-stroke: 1px ${marker};
  pointer-events: none;
`;

const ribbonGroups: [string, number][] = [
  ["Import", 173],
  ["Room", 225],
  ["Shape", 277],
  ["Markup", 198],
  ["Estimate", 244],
  ["Layout, Seam & Tile", 260],
  ["Zoom", 130],
  ["View", 172],
];

export default function App() {
  return (
    <Page>
      <GlobalStyle />
      <Ribbon>
        {ribbonGroups.map(([name, width]) => (
          <RibbonGroup key={name} $w={width}>{name}</RibbonGroup>
        ))}
      </Ribbon>
      <Workspace>
        <LeftPanel />
        <DrawingArea />
      </Workspace>
      <ProjectItemsWindow />
      <RandomTilesWindow />
      <Ring $x={12} $y={637} $w={292} $h={82} />
      <Ring $x={1283} $y={278} $w={148} $h={114} />
      <Ring $x={1225} $y={435} $w={128} $h={83} />
      <StepNumber $x={318} $y={669}>1.</StepNumber>
      <StepNumber $x={1343} $y={212}>2.</StepNumber>
      <StepNumber $x={1346} $y={412}>3.</StepNumber>
    </Page>
  );
}
